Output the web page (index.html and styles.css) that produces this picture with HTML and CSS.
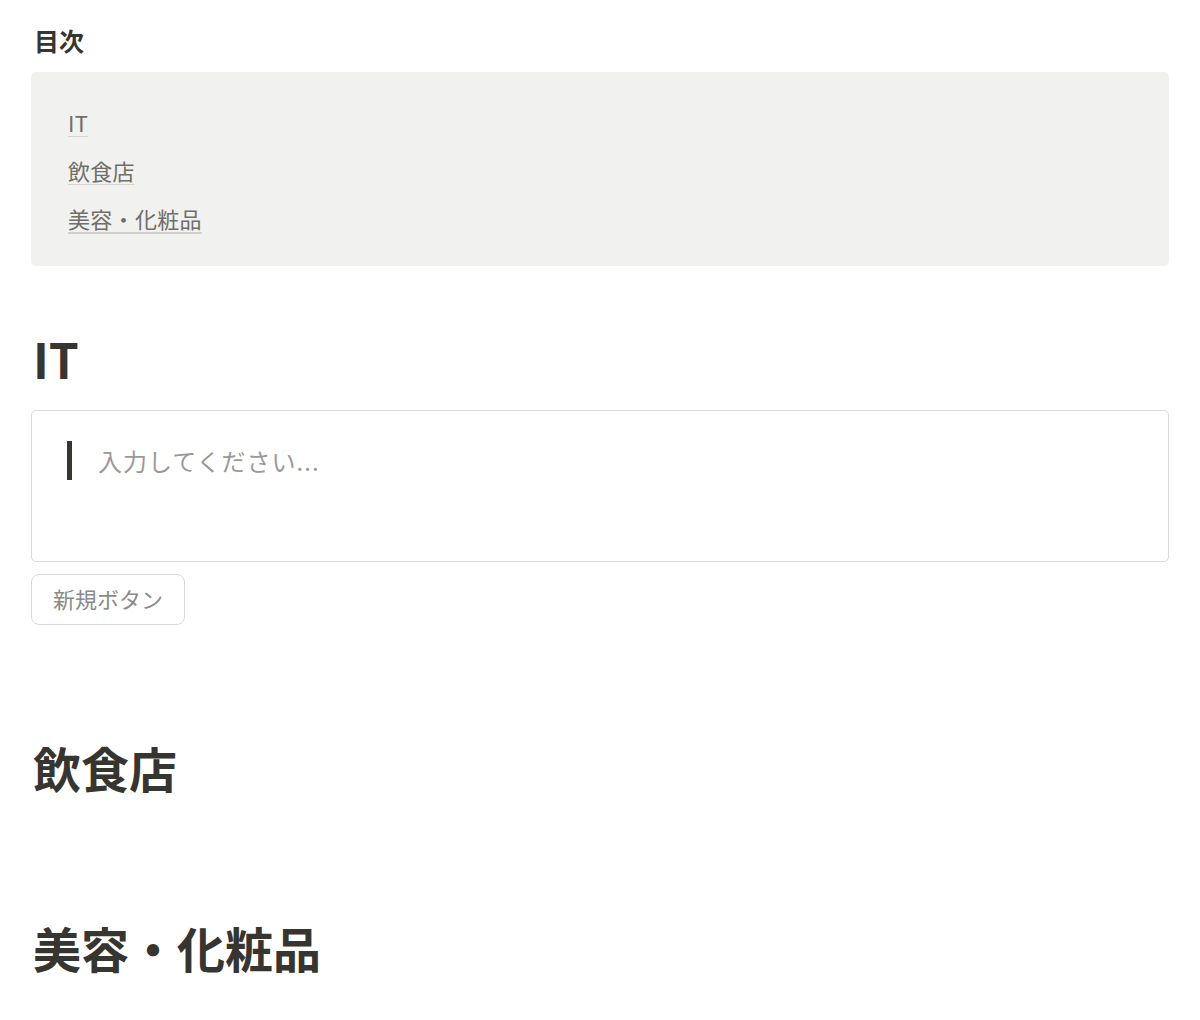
FILE: index.html
```html
<!DOCTYPE html>
<html lang="ja">
<head>
  <meta charset="UTF-8" />
  <meta name="viewport" content="width=device-width, initial-scale=1.0" />
  <title>目次</title>
  <link rel="stylesheet" href="styles.css">
</head>
<body>
  <div class="page">
    <div class="toc-title">目次</div>
    <nav class="toc">
      <a class="toc-link" href="#it">IT</a>
      <a class="toc-link" href="#food">飲食店</a>
      <a class="toc-link hover" href="#beauty">美容・化粧品</a>
    </nav>

    <h2 class="section-title first" id="it">IT</h2>
    <div class="editor">
      <div class="quote">入力してください...</div>
    </div>
    <button class="new-btn">新規ボタン</button>

    <h2 class="section-title food" id="food">飲食店</h2>

    <h2 class="section-title beauty" id="beauty">美容・化粧品</h2>
  </div>
</body>
</html>
```

FILE: styles.css
```css
* {
  margin: 0;
  padding: 0;
  box-sizing: border-box;
}
body {
  background: #fff;
  font-family: "Noto Sans CJK JP", "Noto Sans", sans-serif;
  color: #37352f;
}
.page {
  padding: 22px 31px 0;
}
.toc-title {
  font-size: 25px;
  font-weight: bold;
  line-height: 36px;
  padding-left: 3px;
}
.toc {
  margin-top: 14px;
  background: #f1f1ef;
  border-radius: 5px;
  padding: 26px 37px 24px;
  display: flex;
  flex-direction: column;
  align-items: flex-start;
}
.toc-link {
  font-size: 22px;
  line-height: 48px;
  letter-spacing: 0.3px;
  color: #6f6e69;
  text-decoration: underline;
  text-decoration-color: #d3d2cf;
  text-decoration-thickness: 1px;
  text-underline-offset: 4px;
}
.toc-link.hover {
  text-decoration-color: #cfcecb;
  text-decoration-thickness: 2px;
}
.section-title {
  font-size: 48px;
  font-weight: bold;
  line-height: 56px;
  padding-left: 2px;
}
.section-title.first {
  margin-top: 64px;
}
.section-title.food {
  margin-top: 114px;
}
.section-title.beauty {
  margin-top: 124px;
}
.editor {
  margin-top: 24px;
  height: 152px;
  border: 1px solid #d9d9d9;
  border-radius: 5px;
  padding: 30px 35px 0;
}
.quote {
  border-left: 5px solid #37352f;
  padding-left: 26px;
  font-size: 24px;
  line-height: 39px;
  letter-spacing: 1px;
  color: #9b9a97;
}
.new-btn {
  display: block;
  margin-top: 12px;
  height: 51px;
  padding: 0 21px 4px;
  background: #fff;
  border: 1px solid #d9d9d9;
  border-radius: 8px;
  font-family: inherit;
  font-size: 22px;
  color: #8a8a8a;
}
```
